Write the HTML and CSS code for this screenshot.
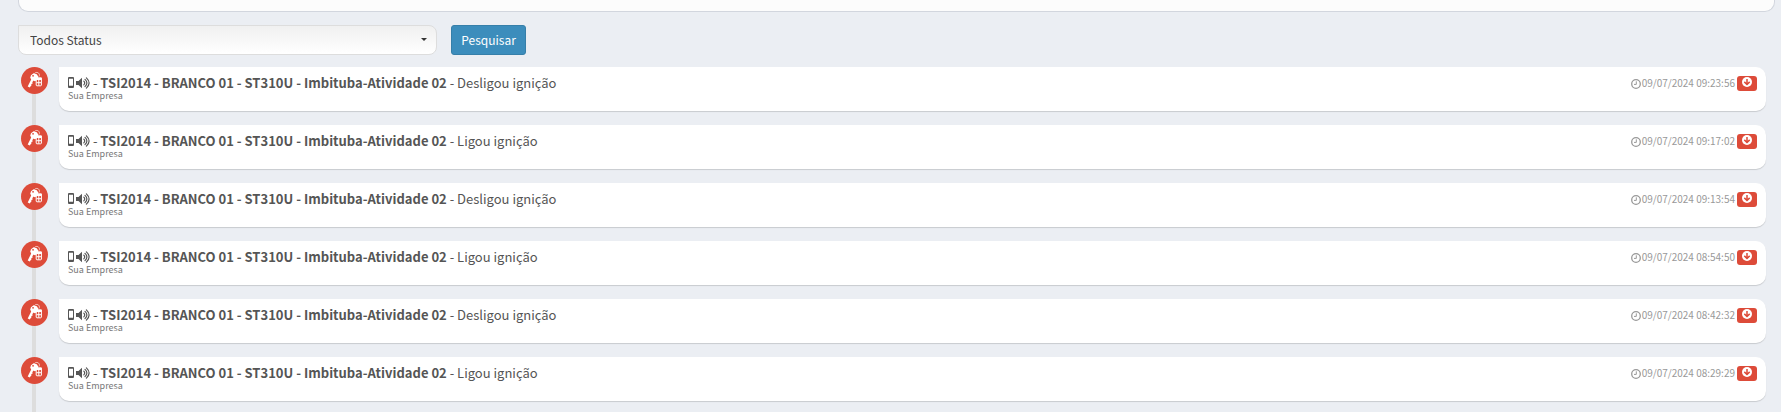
FILE: index.html
```
<!DOCTYPE html>
<html lang="pt-BR">
<head>
    <meta charset="UTF-8">
    <title>Eventos</title>
    <meta name="viewport" content="width=device-width, initial-scale=1.0">
    <link rel="stylesheet" href="styles.css">
</head>
<body>
<svg class="sprite" aria-hidden="true">
    <symbol id="keys" viewBox="0 0 27 27">
        <path d="M7.800 20L12 11.500" stroke="#fff" stroke-width="2.400" fill="none"/>
        <path d="M9.800 15.500l1.600 1M8.800 18l1.400 .8" stroke="#fff" stroke-width="1.200" fill="none"/>
        <path fill="#fff" fill-rule="evenodd" d="M10 8.200l2.600-1.900 3.200 1 1.600 2.400-.8 3-2.600 1.600-3.400-1.200-1.400-2.400zM12 8a.8.8 0 1 0 .1 0z"/>
        <path d="M13.500 6.500c1-1.600 4-1.500 4.800.5.300 1 .2 1.800-.3 2.500" stroke="#fff" stroke-width=".8" fill="none" opacity=".75"/>
        <path d="M15.200 10.800h5.200v7.200q0 .8-.8.8h-3.600q-.8 0-.8-.8z" fill="none" stroke="#fff" stroke-width="1"/>
        <path d="M15 12h5.500" fill="none" stroke="#fff" stroke-width="2"/>
        <path d="M17.800 12v6.500M15.500 15.700h4.500" fill="none" stroke="#fff" stroke-width="1"/>
    </symbol>
    <symbol id="phone" viewBox="0 0 6 11">
        <path fill="currentColor" fill-rule="evenodd" d="M1 0h4q1 0 1 1v9q0 1-1 1H1q-1 0-1-1V1q0-1 1-1zM1 1.700v7h4v-7z"/>
    </symbol>
    <symbol id="volume" viewBox="0 0 14 12">
        <path fill="currentColor" d="M0 4h2.500L6 .8v10.400L2.500 8H0z"/>
        <path fill="none" stroke="currentColor" stroke-width="1.200" stroke-linecap="round" d="M7.800 4.200q1.800 1.800 0 3.600M9 2.400q3.800 3.600 0 7.200M10.400.9q5.400 5.100 0 10.200"/>
    </symbol>
    <symbol id="clock" viewBox="0 0 10 10">
        <circle cx="5" cy="5" r="4.300" fill="none" stroke="currentColor" stroke-width="1.300"/>
        <path d="M5.300 2.300v3.100H3" fill="none" stroke="currentColor" stroke-width="1"/>
    </symbol>
    <symbol id="arrow" viewBox="0 0 10 10">
        <circle cx="5" cy="5" r="5" fill="#fff"/>
        <path d="M5 2v5.300M2.300 4.900L5 7.500l2.700-2.600" fill="none" stroke="#dd4b39" stroke-width="1.500"/>
    </symbol>
</svg>

<div class="panel"></div>

<form class="filter">
    <div class="select-box">
        <select class="status" aria-label="Status">
            <option>Todos Status</option>
        </select>
    </div>
    <button type="button" class="search">Pesquisar</button>
</form>

<ul class="timeline">
    <li class="event">
        <span class="badge"><svg><use href="#keys"/></svg></span>
        <div class="card">
            <div class="info">
                <h3 class="title"><svg class="phone"><use href="#phone"/></svg><svg class="volume"><use href="#volume"/></svg> - <b>TSI2014 - BRANCO 01 - ST310U - Imbituba-Atividade 02</b> - Desligou ignição</h3>
                <div class="company">Sua Empresa</div>
            </div>
            <div class="time"><svg class="clock"><use href="#clock"/></svg><time>09/07/2024 09:23:56</time><button type="button" class="more" aria-label="Detalhes"><svg><use href="#arrow"/></svg></button></div>
        </div>
    </li>
    <li class="event">
        <span class="badge"><svg><use href="#keys"/></svg></span>
        <div class="card">
            <div class="info">
                <h3 class="title"><svg class="phone"><use href="#phone"/></svg><svg class="volume"><use href="#volume"/></svg> - <b>TSI2014 - BRANCO 01 - ST310U - Imbituba-Atividade 02</b> - Ligou ignição</h3>
                <div class="company">Sua Empresa</div>
            </div>
            <div class="time"><svg class="clock"><use href="#clock"/></svg><time>09/07/2024 09:17:02</time><button type="button" class="more" aria-label="Detalhes"><svg><use href="#arrow"/></svg></button></div>
        </div>
    </li>
    <li class="event">
        <span class="badge"><svg><use href="#keys"/></svg></span>
        <div class="card">
            <div class="info">
                <h3 class="title"><svg class="phone"><use href="#phone"/></svg><svg class="volume"><use href="#volume"/></svg> - <b>TSI2014 - BRANCO 01 - ST310U - Imbituba-Atividade 02</b> - Desligou ignição</h3>
                <div class="company">Sua Empresa</div>
            </div>
            <div class="time"><svg class="clock"><use href="#clock"/></svg><time>09/07/2024 09:13:54</time><button type="button" class="more" aria-label="Detalhes"><svg><use href="#arrow"/></svg></button></div>
        </div>
    </li>
    <li class="event">
        <span class="badge"><svg><use href="#keys"/></svg></span>
        <div class="card">
            <div class="info">
                <h3 class="title"><svg class="phone"><use href="#phone"/></svg><svg class="volume"><use href="#volume"/></svg> - <b>TSI2014 - BRANCO 01 - ST310U - Imbituba-Atividade 02</b> - Ligou ignição</h3>
                <div class="company">Sua Empresa</div>
            </div>
            <div class="time"><svg class="clock"><use href="#clock"/></svg><time>09/07/2024 08:54:50</time><button type="button" class="more" aria-label="Detalhes"><svg><use href="#arrow"/></svg></button></div>
        </div>
    </li>
    <li class="event">
        <span class="badge"><svg><use href="#keys"/></svg></span>
        <div class="card">
            <div class="info">
                <h3 class="title"><svg class="phone"><use href="#phone"/></svg><svg class="volume"><use href="#volume"/></svg> - <b>TSI2014 - BRANCO 01 - ST310U - Imbituba-Atividade 02</b> - Desligou ignição</h3>
                <div class="company">Sua Empresa</div>
            </div>
            <div class="time"><svg class="clock"><use href="#clock"/></svg><time>09/07/2024 08:42:32</time><button type="button" class="more" aria-label="Detalhes"><svg><use href="#arrow"/></svg></button></div>
        </div>
    </li>
    <li class="event">
        <span class="badge"><svg><use href="#keys"/></svg></span>
        <div class="card">
            <div class="info">
                <h3 class="title"><svg class="phone"><use href="#phone"/></svg><svg class="volume"><use href="#volume"/></svg> - <b>TSI2014 - BRANCO 01 - ST310U - Imbituba-Atividade 02</b> - Ligou ignição</h3>
                <div class="company">Sua Empresa</div>
            </div>
            <div class="time"><svg class="clock"><use href="#clock"/></svg><time>09/07/2024 08:29:29</time><button type="button" class="more" aria-label="Detalhes"><svg><use href="#arrow"/></svg></button></div>
        </div>
    </li>
</ul>
</body>
</html>
```

FILE: styles.css
```
* {
    box-sizing: border-box;
}
body {
    margin: 0;
    padding: 0 6px 0 18px;
    background-color: #ebeef3;
    color: #555;
    font-family: 'Noto Sans CJK SC', 'Open Sans', sans-serif;
    font-size: 12px;
}
.sprite {
    display: none;
}
.panel {
    height: 12px;
    border: 1px solid #d2d6de;
    border-top: none;
    border-radius: 0 0 10px 10px;
    background-color: #fcfcfc;
}

/* filter */
.filter {
    display: flex;
    gap: 14px;
    margin: 13px 0 12px 0;
}
.select-box {
    position: relative;
    width: calc(25% - 20px);
}
.select-box::after {
    content: "";
    position: absolute;
    right: 10px;
    top: 13px;
    border: 3px solid transparent;
    border-top-color: #333;
    border-bottom: none;
    pointer-events: none;
}
.status {
    display: block;
    width: 100%;
    height: 30px;
    padding: 0 11px 2px 11px;
    appearance: none;
    border: 1px solid #ddd;
    border-radius: 0 8px 8px 8px;
    background: linear-gradient(#f0f0f0, #fff);
    color: #444;
    font-family: inherit;
    font-size: 12px;
}
.search {
    height: 30px;
    padding: 0 9px 2px 9px;
    border: 1px solid #367fa9;
    border-radius: 3px;
    background-color: #3c8dbc;
    color: #fff;
    font-family: inherit;
    font-size: 12px;
    cursor: pointer;
}
.search:hover {
    background-color: #367fa9;
}

/* timeline */
.timeline {
    position: relative;
    display: flex;
    flex-direction: column;
    gap: 14px;
    margin: 0;
    padding: 0 9px 11px 3px;
    list-style: none;
}
.timeline::before {
    content: "";
    position: absolute;
    top: 0;
    bottom: 0;
    left: 14px;
    width: 4px;
    background-color: #ddd;
}
.event {
    display: flex;
    gap: 11px;
}
.badge {
    position: relative;
    flex: none;
    width: 27px;
    height: 27px;
    border-radius: 50%;
    background-color: #dd4b39;
}
.badge svg {
    display: block;
    width: 27px;
    height: 27px;
}
.card {
    flex: 1;
    display: flex;
    justify-content: space-between;
    height: 44px;
    padding: 8px 9px 0 9px;
    border-radius: 0 10px 10px 10px;
    background-color: #fff;
    box-shadow: 0 1px 1px rgba(0, 0, 0, 0.15);
}
.title {
    margin: 0;
    font-size: 13px;
    font-weight: normal;
    line-height: 16px;
}
.phone {
    width: 6px;
    height: 11px;
    margin-right: 2px;
}
.volume {
    width: 14px;
    height: 12px;
    vertical-align: -1px;
}
.company {
    color: #777;
    font-size: 9px;
    line-height: 10px;
}
.time {
    display: flex;
    align-items: center;
    height: 17px;
    color: #999;
    font-size: 10px;
    line-height: 16px;
}
.time time {
    padding-bottom: 1px;
}
.clock {
    width: 10px;
    height: 10px;
    margin-right: 1px;
}
.more {
    display: flex;
    justify-content: center;
    width: 20px;
    height: 15px;
    margin-left: 2px;
    padding: 1px 0 0 0;
    border: none;
    border-radius: 3px;
    background-color: #dd4b39;
    cursor: pointer;
}
.more svg {
    width: 10px;
    height: 10px;
}
```
